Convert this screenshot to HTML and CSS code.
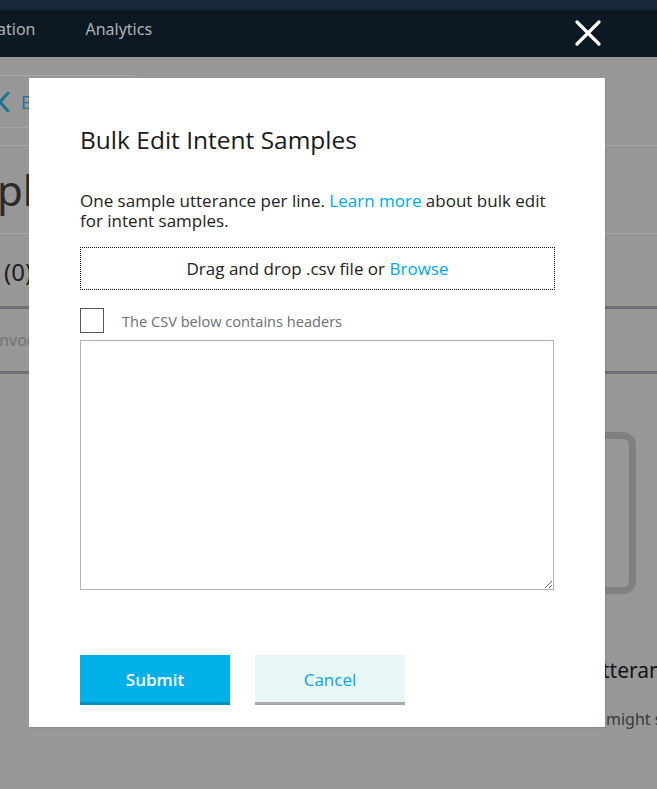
FILE: index.html
```html
<!DOCTYPE html>
<html lang="en">
<head>
<meta charset="utf-8">
<title>Bulk Edit Intent Samples</title>
<link rel="stylesheet" href="styles.css">
</head>
<body>
<div class="topstrip"></div>
<nav class="nav">
  <span class="nav-item nav-cut">ation</span>
  <span class="nav-item">Analytics</span>
</nav>
<main class="page">
  <div class="back-row">
    <div class="back-btn">
      <svg class="chev" width="12" height="22" viewBox="0 0 12 22"><path d="M10 2 L2 11 L10 20" fill="none" stroke="#1a7594" stroke-width="3" stroke-linecap="round" stroke-linejoin="round"/></svg>
      <span class="back-label">Back</span>
    </div>
  </div>
  <div class="rule"></div>
  <div class="big">ples</div>
  <div class="rule"></div>
  <div class="count">(0)</div>
  <div class="thick"></div>
  <div class="invo">invocation</div>
  <div class="thick"></div>
  <div class="lower">
    <div class="ring"></div>
    <div class="utt">utterances</div>
    <div class="might">might say</div>
  </div>
</main>

<button class="close" aria-label="Close">
  <svg width="26" height="26" viewBox="0 0 26 26"><path d="M2 2 L24 24 M24 2 L2 24" stroke="#fff" stroke-width="3.2" stroke-linecap="round"/></svg>
</button>

<div class="modal">
  <h2 class="title">Bulk Edit Intent Samples</h2>
  <p class="desc">One sample utterance per line. <a class="link">Learn more</a> about bulk edit for intent samples.</p>
  <div class="drop"><span>Drag and drop .csv file or <a class="link">Browse</a></span></div>
  <label class="check-row"><span class="box"></span><span class="check-label">The CSV below contains headers</span></label>
  <textarea class="area"></textarea>
  <div class="actions">
    <button class="btn submit">Submit</button>
    <button class="btn cancel">Cancel</button>
  </div>
</div>
</body>
</html>
```
FILE: styles.css
```css
* { box-sizing: border-box; }
html, body { margin: 0; padding: 0; }
body {
  width: 657px;
  height: 789px;
  overflow: hidden;
  font-family: "Open Sans", "Noto Sans", sans-serif;
  background: #979797;
  position: relative;
}
.topstrip { height: 10px; background: #17293a; }
.nav {
  height: 47px;
  background: #0c1922;
  display: flex;
  align-items: center;
  gap: 50px;
  padding-bottom: 10px;
}
.nav-item { color: #aeb2b6; font-size: 16px; font-family: "Noto Sans", sans-serif; }
.nav-cut { margin-left: -3px; }

.page { background: #979797; }
.back-row { padding-top: 18px; height: 88px; }
.back-btn {
  width: 147px;
  height: 53px;
  margin-left: -10px;
  border: 1px solid #a6a6a6;
  border-left: none;
  border-radius: 0 4px 4px 0;
  display: flex;
  align-items: center;
  gap: 11px;
  padding-left: 8px;
  color: #1c7591;
}
.chev { display: block; }
.back-label { font-size: 18px; }
.rule { height: 1px; background: #a9a9a9; }
.big {
  font-size: 42px;
  color: #2a2a2a;
  height: 87px;
  line-height: 87px;
  margin-left: -3px;
  font-family: "Noto Sans", sans-serif;
}
.count { font-size: 24px; color: #1e1e1e; height: 72px; line-height: 76px; padding-left: 4px; font-family: "Noto Sans", sans-serif; }
.thick { height: 3px; background: #6d6d72; }
.invo { font-size: 16px; color: #717171; height: 62px; line-height: 62px; margin-left: -5px; font-family: "Noto Sans", sans-serif; }
.lower { position: relative; height: 420px; }
.ring {
  position: absolute;
  left: 563px;
  top: 58px;
  width: 73px;
  height: 162px;
  border: 7px solid #808080;
  border-radius: 13px;
}
.utt { position: absolute; left: 589px; top: 282px; font-size: 21px; color: #141414; font-family: "Noto Sans", sans-serif; white-space: nowrap; }
.might { position: absolute; left: 606px; top: 334px; font-size: 16px; color: #3a3a3a; font-family: "Noto Sans", sans-serif; white-space: nowrap; }

.close {
  position: absolute;
  left: 575px;
  top: 20px;
  width: 26px;
  height: 26px;
  padding: 0;
  border: none;
  background: none;
}
.close svg { display: block; }

.modal {
  position: absolute;
  left: 29px;
  top: 78px;
  width: 576px;
  height: 649px;
  background: #fff;
  box-shadow: 1px 1px 1px rgba(0,0,0,0.08);
  padding: 47px 51px 0 51px;
  font-family: "Open Sans", "Noto Sans", sans-serif;
}
.title {
  margin: 0;
  font-size: 24.5px;
  font-weight: normal;
  color: #1a1a1a;
  line-height: 30px;
}
.desc {
  margin: 36px 0 0 0;
  font-size: 17px;
  line-height: 20px;
  color: #222;
}
.link { color: #00a8e1; text-decoration: none; }
.drop {
  margin-top: 16px;
  height: 43px;
  width: 475px;
  border: 1px dotted #111;
  display: flex;
  align-items: center;
  justify-content: center;
  font-size: 17px;
  color: #222;
}
.check-row {
  margin-top: 18px;
  display: flex;
  align-items: center;
  gap: 18px;
  height: 25px;
}
.box {
  width: 24px;
  height: 25px;
  border: 1.5px solid #55555c;
  display: block;
}
.check-label { font-size: 14.6px; color: #6e6e75; }
.area {
  display: block;
  margin-top: 7px;
  width: 474px;
  height: 250px;
  border: 1px solid #aab7b8;
  resize: vertical;
  font-family: inherit;
}
.actions {
  margin-top: 65px;
  display: flex;
  gap: 25px;
}
.btn {
  width: 150px;
  height: 50px;
  font-family: inherit;
  font-size: 17px;
  border: none;
  border-bottom: 3px solid;
  padding: 0;
  padding-top: 2px;
}
.submit { background: #00b0e6; color: #fff; font-weight: 600; border-bottom-color: #0090c2; }
.cancel { background: #e8f6f8; color: #00a8e1; border-bottom-color: #aaaaaa; }
```
